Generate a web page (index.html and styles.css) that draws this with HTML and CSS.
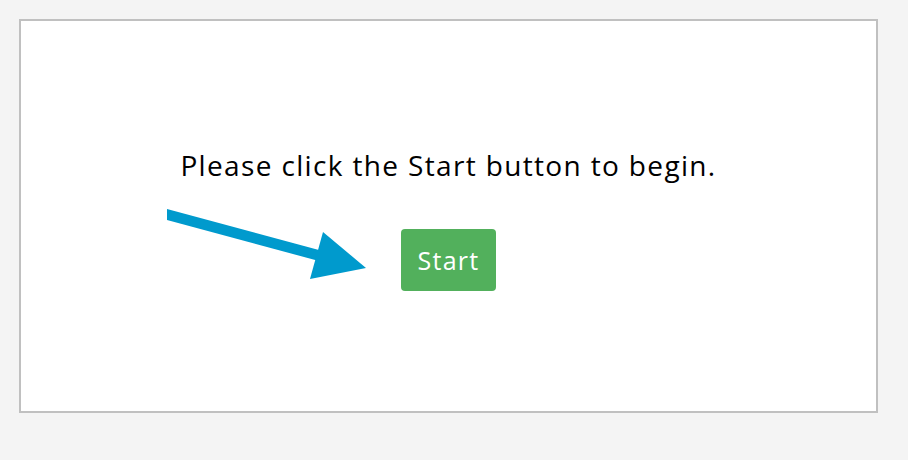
FILE: index.html
```html
<!DOCTYPE html>
<html>
<head>
<meta charset="utf-8">
<link rel="stylesheet" href="styles.css">
</head>
<body>
<div class="frame">
  <svg class="arrow" width="230" height="100" viewBox="145 190 230 100" xmlns="http://www.w3.org/2000/svg">
    <polygon points="167,209 330,253 330,264 167,220" fill="#009acd"/>
    <polygon points="323,232 366,268 310,279" fill="#009acd"/>
  </svg>
  <div class="content">
    <p class="prompt">Please click the Start button to begin.</p>
    <button class="start">Start</button>
  </div>
</div>
</body>
</html>
```
FILE: styles.css
```css
html, body {
  margin: 0;
  padding: 0;
  background: #f4f4f4;
}
body {
  padding: 19px;
}
.frame {
  position: relative;
  box-sizing: border-box;
  width: 859px;
  height: 394px;
  border: 2px solid #c0c0c0;
  background: #ffffff;
}
.content {
  display: flex;
  flex-direction: column;
  align-items: center;
  padding-top: 126px;
}
.prompt {
  margin: 0;
  font-family: "Open Sans", sans-serif;
  font-size: 28px;
  letter-spacing: 1.35px;
  line-height: 36px;
  color: #000;
}
.start {
  margin-top: 46px;
  width: 95px;
  height: 62px;
  border: none;
  border-radius: 4px;
  background: #52b05c;
  color: #fff;
  font-family: "Open Sans", sans-serif;
  font-size: 25px;
  letter-spacing: 1.3px;
  padding: 0;
}
.arrow {
  position: absolute;
  left: 124px;
  top: 169px;
}
```
